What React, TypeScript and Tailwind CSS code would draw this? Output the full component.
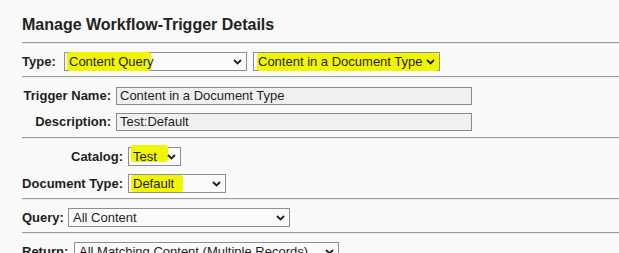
import React from "react";

function Chevron() {
  return (
    <svg width="9" height="6" viewBox="0 0 9 6" className="shrink-0">
      <path d="M1 1l3.5 3.5L8 1" fill="none" stroke="#222" strokeWidth="1.9" />
    </svg>
  );
}

function Hr() {
  return <div className="h-0 border-t border-b border-t-[#9b9b9b] border-b-[#ececec]" />;
}

function Select({
  value,
  width,
  mark,
}: {
  value: string;
  width: string;
  mark?: string;
}) {
  return (
    <div
      className={`relative flex h-[19px] items-center justify-between border border-[#8f8f8f] bg-[#fbfbfb] pl-[4px] pr-[4px] ${width}`}
    >
      {mark && <div className={`absolute rounded-[3px] bg-[#f2f500] ${mark}`} />}
      <span className="relative whitespace-nowrap leading-[17px]">{value}</span>
      <span className="relative">
        <Chevron />
      </span>
    </div>
  );
}

function Input({ value }: { value: string }) {
  return (
    <div className="flex h-[18px] w-[356px] items-center border border-[#8a8a8a] bg-[#f0f0f0] pl-[3px] leading-[16px]">
      {value}
    </div>
  );
}

export default function App() {
  return (
    <div className="min-h-screen bg-[#fafafa] pl-[22px] font-['Liberation_Sans',Arial,sans-serif] text-[13px] leading-[16px] text-[#1e1e1e]">
      <h1 className="pt-[15px] text-[16px] font-bold leading-[19px] text-[#222]">
        Manage Workflow-Trigger Details
      </h1>

      <div className="mt-[8px]">
        <Hr />
      </div>

      <div className="flex items-center pt-[8px] pb-[5px]">
        <span className="w-[42px] font-bold">Type:</span>
        <Select
          value="Content Query"
          width="w-[183px]"
          mark="left-[2px] top-[-1px] h-[19px] w-[84px]"
        />
        <div className="w-[6px]" />
        <Select
          value="Content in a Document Type"
          width="w-[187px]"
          mark="left-[3px] top-[0px] h-[18px] w-[182px]"
        />
      </div>
      <Hr />

      <div className="flex flex-col gap-[8px] pt-[9px] pb-[6px]">
        <div className="flex items-center">
          <span className="w-[89px] text-right font-bold">Trigger Name:</span>
          <div className="w-[5px]" />
          <Input value="Content in a Document Type" />
        </div>
        <div className="flex items-center">
          <span className="w-[89px] text-right font-bold">Description:</span>
          <div className="w-[5px]" />
          <Input value="Test:Default" />
        </div>
      </div>
      <Hr />

      <div className="flex flex-col gap-[8px] pt-[8px] pb-[5px]">
        <div className="flex items-center">
          <span className="w-[101px] text-right font-bold">Catalog:</span>
          <div className="w-[5px]" />
          <Select
            value="Test"
            width="w-[53px]"
            mark="left-[2px] top-[-3px] h-[17px] w-[37px]"
          />
        </div>
        <div className="flex items-center">
          <span className="w-[101px] text-right font-bold">Document Type:</span>
          <div className="w-[5px]" />
          <Select
            value="Default"
            width="w-[98px]"
            mark="left-[2px] top-[0px] h-[17px] w-[52px]"
          />
        </div>
      </div>
      <Hr />

      <div className="flex items-center pt-[8px] pb-[5px]">
        <span className="w-[46px] font-bold">Query:</span>
        <Select value="All Content" width="w-[222px]" />
      </div>
      <Hr />

      <div className="flex items-center pt-[8px] pb-[5px]">
        <span className="w-[52px] font-bold">Return:</span>
        <Select value="All Matching Content (Multiple Records)" width="w-[265px]" />
      </div>
    </div>
  );
}
